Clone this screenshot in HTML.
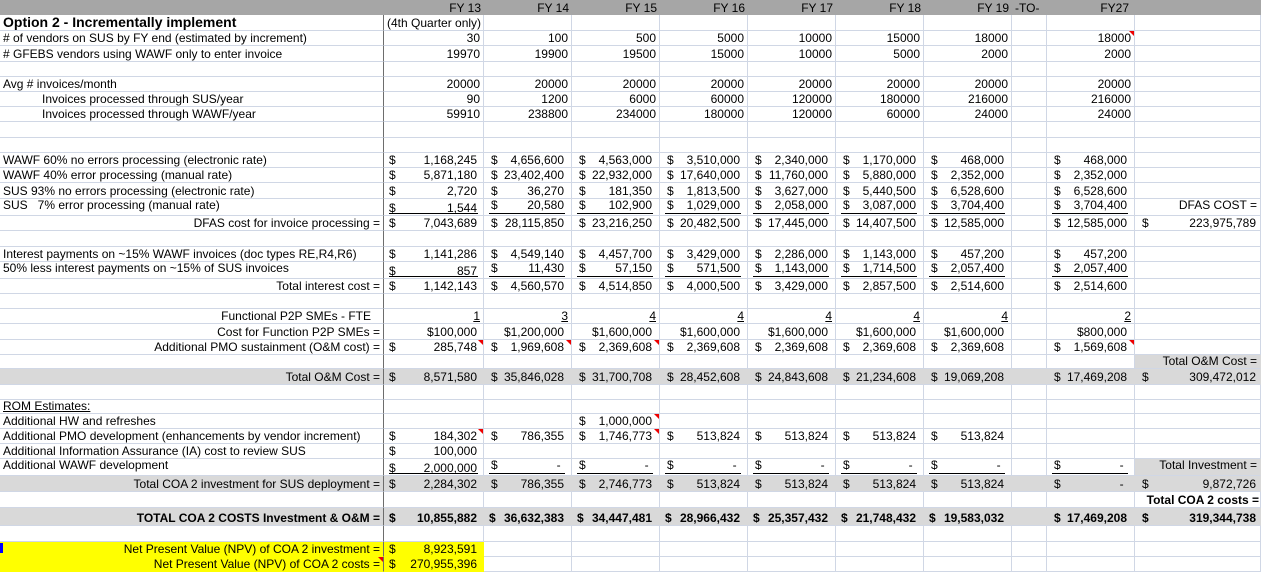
<!DOCTYPE html>
<html><head><meta charset="utf-8"><style>
html,body{margin:0;padding:0;background:#fff;}
body{width:1261px;height:572px;overflow:hidden;position:relative;font-family:"Liberation Sans",Arial,sans-serif;font-size:12px;color:#000;}
table{border-collapse:separate;border-spacing:0;table-layout:fixed;width:1261px;position:absolute;left:0;top:0;}
td{padding:0 3px;white-space:nowrap;overflow:visible;border-right:1px solid #d0d7e5;border-bottom:1px solid #d0d7e5;vertical-align:bottom;line-height:13px;box-sizing:border-box;position:relative;text-align:right;}
td.a{text-align:left;border-right:1px solid #6d6d6d;}
td.ar{text-align:right;border-right:1px solid #6d6d6d;}
tr.h td{background:#a6a6a6;border:none;}
td.m{padding:0 7px 0 7px;}
td.m i{font-style:normal;float:left;}
td.b.m{padding:0 6px 0 5px;}
td.u{padding-bottom:3px;}
td.u::after{content:"";position:absolute;left:5px;right:6px;bottom:1px;border-bottom:1px solid #000;}
td.b.u::after{left:5px;right:5px;}
td.t::before{content:"";position:absolute;right:0;top:0;border-top:5px solid #e00;border-left:5px solid transparent;}
tr.g td,td.g{background:#d9d9d9;border-right-color:#d9d9d9;}
tr.g td.a,tr.g td.ar{border-right-color:#6d6d6d;}
td.y{background:#ffff00;border-right-color:#ffff00;border-bottom-color:#ffff00;}
td.y.ar{border-right-color:#6d6d6d;}
.bd td{font-weight:bold;}
.dig{text-decoration:underline;}
</style></head><body>
<table>
<colgroup><col style="width:384px"><col style="width:100px"><col style="width:88px"><col style="width:88px"><col style="width:88px"><col style="width:88px"><col style="width:88px"><col style="width:88px"><col style="width:35px"><col style="width:88px"><col style="width:126px"></colgroup>
<tr class="h" style="height:15px"><td style="text-align:left"></td><td>FY 13</td><td>FY 14</td><td>FY 15</td><td>FY 16</td><td>FY 17</td><td>FY 18</td><td>FY 19</td><td style="text-align:left;padding-left:3px">-TO-</td><td style="padding-right:6px">FY27</td><td></td></tr>
<tr style="height:16px"><td class="a" style="font-weight:bold;font-size:14px;line-height:15px">Option 2 - Incrementally implement</td><td>(4th Quarter only)</td><td></td><td></td><td></td><td></td><td></td><td></td><td></td><td></td><td></td></tr>
<tr style="height:15px"><td class="a"># of vendors on SUS by FY end (estimated by increment)</td><td>30</td><td>100</td><td>500</td><td>5000</td><td>10000</td><td>15000</td><td>18000</td><td></td><td class="t">18000</td><td></td></tr>
<tr style="height:16px"><td class="a"># GFEBS vendors using WAWF only to enter invoice</td><td>19970</td><td>19900</td><td>19500</td><td>15000</td><td>10000</td><td>5000</td><td>2000</td><td></td><td>2000</td><td></td></tr>
<tr style="height:15px"><td class="a"></td><td></td><td></td><td></td><td></td><td></td><td></td><td></td><td></td><td></td><td></td></tr>
<tr style="height:15px"><td class="a">Avg # invoices/month</td><td>20000</td><td>20000</td><td>20000</td><td>20000</td><td>20000</td><td>20000</td><td>20000</td><td></td><td>20000</td><td></td></tr>
<tr style="height:15px"><td class="a" style="padding-left:42px">Invoices processed through SUS/year</td><td>90</td><td>1200</td><td>6000</td><td>60000</td><td>120000</td><td>180000</td><td>216000</td><td></td><td>216000</td><td></td></tr>
<tr style="height:15px"><td class="a" style="padding-left:42px">Invoices processed through WAWF/year</td><td>59910</td><td>238800</td><td>234000</td><td>180000</td><td>120000</td><td>60000</td><td>24000</td><td></td><td>24000</td><td></td></tr>
<tr style="height:16px"><td class="a"></td><td></td><td></td><td></td><td></td><td></td><td></td><td></td><td></td><td></td><td></td></tr>
<tr style="height:15px"><td class="a"></td><td></td><td></td><td></td><td></td><td></td><td></td><td></td><td></td><td></td><td></td></tr>
<tr style="height:15px"><td class="a">WAWF 60% no errors processing (electronic rate)</td><td class="b m"><i>$</i>1,168,245</td><td class="m"><i>$</i>4,656,600</td><td class="m"><i>$</i>4,563,000</td><td class="m"><i>$</i>3,510,000</td><td class="m"><i>$</i>2,340,000</td><td class="m"><i>$</i>1,170,000</td><td class="m"><i>$</i>468,000</td><td></td><td class="m"><i>$</i>468,000</td><td></td></tr>
<tr style="height:15px"><td class="a">WAWF 40% error processing (manual rate)</td><td class="b m"><i>$</i>5,871,180</td><td class="m"><i>$</i>23,402,400</td><td class="m"><i>$</i>22,932,000</td><td class="m"><i>$</i>17,640,000</td><td class="m"><i>$</i>11,760,000</td><td class="m"><i>$</i>5,880,000</td><td class="m"><i>$</i>2,352,000</td><td></td><td class="m"><i>$</i>2,352,000</td><td></td></tr>
<tr style="height:16px"><td class="a">SUS 93% no errors processing (electronic rate)</td><td class="b m"><i>$</i>2,720</td><td class="m"><i>$</i>36,270</td><td class="m"><i>$</i>181,350</td><td class="m"><i>$</i>1,813,500</td><td class="m"><i>$</i>3,627,000</td><td class="m"><i>$</i>5,440,500</td><td class="m"><i>$</i>6,528,600</td><td></td><td class="m"><i>$</i>6,528,600</td><td></td></tr>
<tr style="height:17px"><td class="a" style="padding-bottom:3px">SUS &nbsp; 7% error processing (manual rate)</td><td class="b m u"><i>$</i>1,544</td><td class="m u"><i>$</i>20,580</td><td class="m u"><i>$</i>102,900</td><td class="m u"><i>$</i>1,029,000</td><td class="m u"><i>$</i>2,058,000</td><td class="m u"><i>$</i>3,087,000</td><td class="m u"><i>$</i>3,704,400</td><td></td><td class="m u"><i>$</i>3,704,400</td><td style="padding-bottom:3px">DFAS COST =</td></tr>
<tr style="height:15px"><td class="ar">DFAS cost for invoice processing =</td><td class="b m"><i>$</i>7,043,689</td><td class="m"><i>$</i>28,115,850</td><td class="m"><i>$</i>23,216,250</td><td class="m"><i>$</i>20,482,500</td><td class="m"><i>$</i>17,445,000</td><td class="m"><i>$</i>14,407,500</td><td class="m"><i>$</i>12,585,000</td><td></td><td class="m"><i>$</i>12,585,000</td><td class="m" style="padding-right:4px"><i>$</i>223,975,789</td></tr>
<tr style="height:16px"><td class="a"></td><td></td><td></td><td></td><td></td><td></td><td></td><td></td><td></td><td></td><td></td></tr>
<tr style="height:15px"><td class="a">Interest payments on ~15% WAWF invoices (doc types RE,R4,R6)</td><td class="b m"><i>$</i>1,141,286</td><td class="m"><i>$</i>4,549,140</td><td class="m"><i>$</i>4,457,700</td><td class="m"><i>$</i>3,429,000</td><td class="m"><i>$</i>2,286,000</td><td class="m"><i>$</i>1,143,000</td><td class="m"><i>$</i>457,200</td><td></td><td class="m"><i>$</i>457,200</td><td></td></tr>
<tr style="height:17px"><td class="a" style="padding-bottom:3px">50% less interest payments on ~15% of SUS invoices</td><td class="b m u"><i>$</i>857</td><td class="m u"><i>$</i>11,430</td><td class="m u"><i>$</i>57,150</td><td class="m u"><i>$</i>571,500</td><td class="m u"><i>$</i>1,143,000</td><td class="m u"><i>$</i>1,714,500</td><td class="m u"><i>$</i>2,057,400</td><td></td><td class="m u"><i>$</i>2,057,400</td><td></td></tr>
<tr style="height:15px"><td class="ar">Total interest cost =</td><td class="b m"><i>$</i>1,142,143</td><td class="m"><i>$</i>4,560,570</td><td class="m"><i>$</i>4,514,850</td><td class="m"><i>$</i>4,000,500</td><td class="m"><i>$</i>3,429,000</td><td class="m"><i>$</i>2,857,500</td><td class="m"><i>$</i>2,514,600</td><td></td><td class="m"><i>$</i>2,514,600</td><td></td></tr>
<tr style="height:15px"><td class="a"></td><td></td><td></td><td></td><td></td><td></td><td></td><td></td><td></td><td></td><td></td></tr>
<tr style="height:15px"><td class="ar" style="padding-right:12px">Functional P2P SMEs - FTE</td><td><span class="dig">1</span></td><td><span class="dig">3</span></td><td><span class="dig">4</span></td><td><span class="dig">4</span></td><td><span class="dig">4</span></td><td><span class="dig">4</span></td><td><span class="dig">4</span></td><td></td><td><span class="dig">2</span></td><td></td></tr>
<tr style="height:16px"><td class="ar">Cost for Function P2P SMEs =</td><td style="padding-right:6px">$100,000</td><td style="padding-right:7px">$1,200,000</td><td style="padding-right:7px">$1,600,000</td><td style="padding-right:7px">$1,600,000</td><td style="padding-right:7px">$1,600,000</td><td style="padding-right:7px">$1,600,000</td><td style="padding-right:7px">$1,600,000</td><td></td><td style="padding-right:7px">$800,000</td><td></td></tr>
<tr style="height:15px"><td class="ar">Additional PMO sustainment (O&amp;M cost) =</td><td class="b m t"><i>$</i>285,748</td><td class="m t"><i>$</i>1,969,608</td><td class="m t"><i>$</i>2,369,608</td><td class="m"><i>$</i>2,369,608</td><td class="m"><i>$</i>2,369,608</td><td class="m"><i>$</i>2,369,608</td><td class="m"><i>$</i>2,369,608</td><td></td><td class="m t"><i>$</i>1,569,608</td><td></td></tr>
<tr style="height:14px"><td class="a"></td><td></td><td></td><td></td><td></td><td></td><td></td><td></td><td></td><td></td><td class="g">Total O&amp;M Cost =</td></tr>
<tr class="g" style="height:16px"><td class="ar">Total O&amp;M Cost =</td><td class="b m"><i>$</i>8,571,580</td><td class="m"><i>$</i>35,846,028</td><td class="m"><i>$</i>31,700,708</td><td class="m"><i>$</i>28,452,608</td><td class="m"><i>$</i>24,843,608</td><td class="m"><i>$</i>21,234,608</td><td class="m"><i>$</i>19,069,208</td><td></td><td class="m"><i>$</i>17,469,208</td><td class="m" style="padding-right:4px"><i>$</i>309,472,012</td></tr>
<tr style="height:15px"><td class="a"></td><td></td><td></td><td></td><td></td><td></td><td></td><td></td><td></td><td></td><td></td></tr>
<tr style="height:14px"><td class="a"><u>ROM Estimates:</u></td><td></td><td></td><td></td><td></td><td></td><td></td><td></td><td></td><td></td><td></td></tr>
<tr style="height:15px"><td class="a">Additional HW and refreshes</td><td></td><td></td><td class="m t"><i>$</i>1,000,000</td><td></td><td></td><td></td><td></td><td></td><td></td><td></td></tr>
<tr style="height:15px"><td class="a">Additional PMO development (enhancements by vendor increment)</td><td class="b m t"><i>$</i>184,302</td><td class="m"><i>$</i>786,355</td><td class="m t"><i>$</i>1,746,773</td><td class="m"><i>$</i>513,824</td><td class="m"><i>$</i>513,824</td><td class="m"><i>$</i>513,824</td><td class="m"><i>$</i>513,824</td><td></td><td></td><td></td></tr>
<tr style="height:15px"><td class="a">Additional Information Assurance (IA) cost to review SUS</td><td class="b m"><i>$</i>100,000</td><td></td><td></td><td></td><td></td><td></td><td></td><td></td><td></td><td></td></tr>
<tr style="height:17px"><td class="a" style="padding-bottom:3px">Additional WAWF development</td><td class="b m u"><i>$</i>2,000,000</td><td class="m u"><i>$</i>-&nbsp;</td><td class="m u"><i>$</i>-&nbsp;</td><td class="m u"><i>$</i>-&nbsp;</td><td class="m u"><i>$</i>-&nbsp;</td><td class="m u"><i>$</i>-&nbsp;</td><td class="m u"><i>$</i>-&nbsp;</td><td></td><td class="m u"><i>$</i>-&nbsp;</td><td class="g" style="padding-bottom:3px">Total Investment =</td></tr>
<tr class="g" style="height:16px"><td class="ar">Total COA 2 investment for SUS deployment =</td><td class="b m"><i>$</i>2,284,302</td><td class="m"><i>$</i>786,355</td><td class="m"><i>$</i>2,746,773</td><td class="m"><i>$</i>513,824</td><td class="m"><i>$</i>513,824</td><td class="m"><i>$</i>513,824</td><td class="m"><i>$</i>513,824</td><td></td><td class="m"><i>$</i>-&nbsp;</td><td class="m" style="padding-right:4px"><i>$</i>9,872,726</td></tr>
<tr style="height:16px"><td class="a"></td><td></td><td></td><td></td><td></td><td></td><td></td><td></td><td></td><td></td><td style="font-weight:bold;padding-right:1px">Total COA 2 costs =</td></tr>
<tr class="g bd" style="height:18px"><td class="ar">TOTAL COA 2 COSTS Investment &amp; O&amp;M =</td><td class="b m"><i>$</i>10,855,882</td><td class="m" style="padding-left:5px"><i>$</i>36,632,383</td><td class="m" style="padding-left:5px"><i>$</i>34,447,481</td><td class="m" style="padding-left:5px"><i>$</i>28,966,432</td><td class="m" style="padding-left:5px"><i>$</i>25,357,432</td><td class="m" style="padding-left:5px"><i>$</i>21,748,432</td><td class="m" style="padding-left:5px"><i>$</i>19,583,032</td><td></td><td class="m"><i>$</i>17,469,208</td><td class="m" style="padding-right:4px"><i>$</i>319,344,738</td></tr>
<tr style="height:16px"><td class="a"></td><td></td><td></td><td></td><td></td><td></td><td></td><td></td><td></td><td></td><td></td></tr>
<tr style="height:15px"><td class="ar y">Net Present Value (NPV) of COA 2 investment =</td><td class="b m y"><i>$</i>8,923,591</td><td></td><td></td><td></td><td></td><td></td><td></td><td></td><td></td><td></td></tr>
<tr style="height:15px"><td class="ar y t">Net Present Value (NPV) of COA 2 costs =</td><td class="b m y"><i>$</i>270,955,396</td><td></td><td></td><td></td><td></td><td></td><td></td><td></td><td></td><td></td></tr>
</table>
<div style="position:absolute;left:0;top:543px;width:3px;height:10px;background:#0000ff"></div>
</body></html>
